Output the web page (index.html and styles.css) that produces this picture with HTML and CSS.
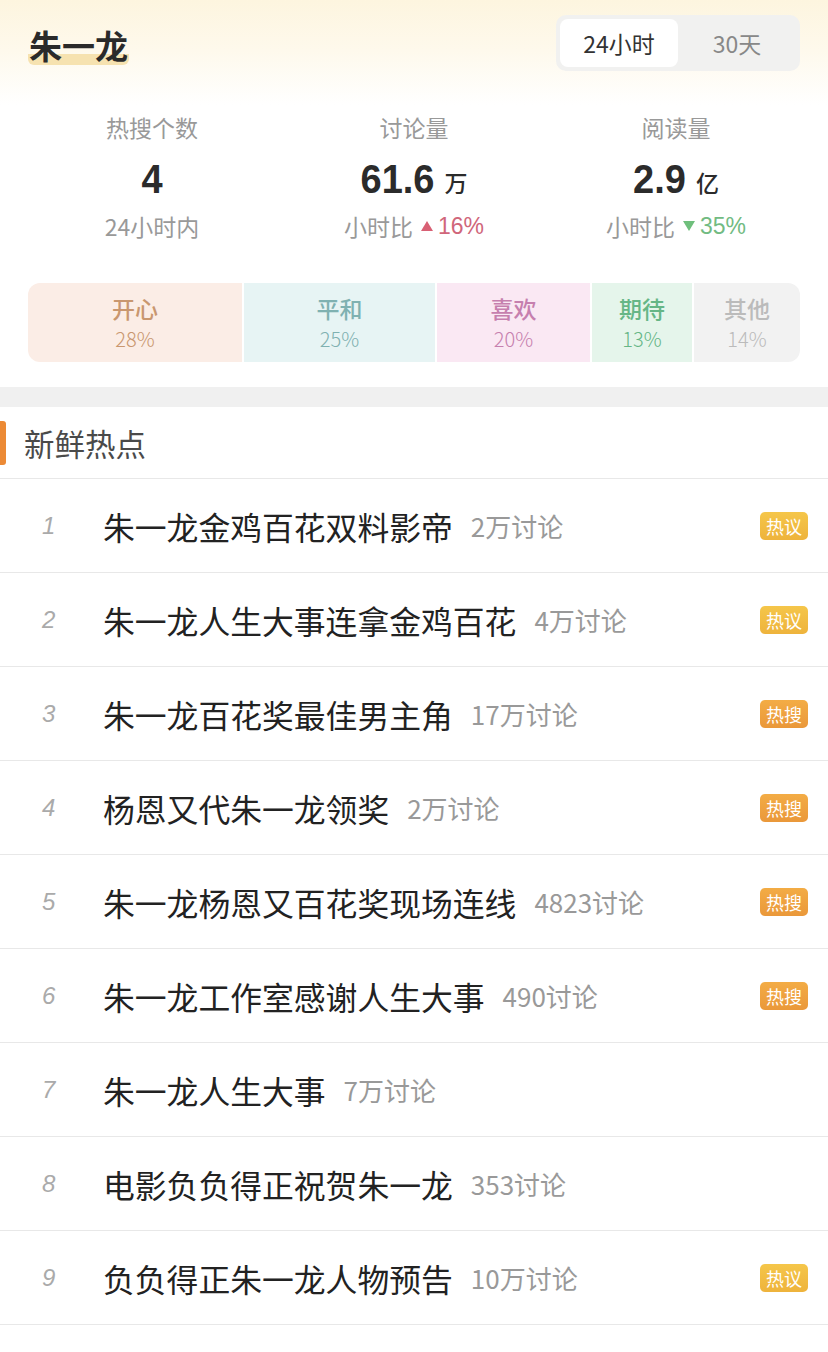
FILE: index.html
```html
<!DOCTYPE html>
<html lang="zh">
<head>
<meta charset="utf-8">
<link rel="stylesheet" href="styles.css">
</head>
<body>
<div class="page">
  <section class="top">
    <div class="head">
      <h1 class="title"><span class="title-text">朱一龙</span></h1>
      <div class="tabs">
        <div class="tab active">24小时</div>
        <div class="tab">30天</div>
      </div>
    </div>
    <div class="stats">
      <div class="stat">
        <div class="stat-label">热搜个数</div>
        <div class="stat-value"><span class="num">4</span></div>
        <div class="stat-sub">24小时内</div>
      </div>
      <div class="stat">
        <div class="stat-label">讨论量</div>
        <div class="stat-value"><span class="num">61.6</span><span class="unit">万</span></div>
        <div class="stat-sub">小时比<span class="tri up"></span><span class="chg up-c">16%</span></div>
      </div>
      <div class="stat">
        <div class="stat-label">阅读量</div>
        <div class="stat-value"><span class="num">2.9</span><span class="unit">亿</span></div>
        <div class="stat-sub">小时比<span class="tri down"></span><span class="chg down-c">35%</span></div>
      </div>
    </div>
    <div class="moods">
      <div class="mood m1"><div class="mood-name">开心</div><div class="mood-pct">28%</div></div>
      <div class="mood m2"><div class="mood-name">平和</div><div class="mood-pct">25%</div></div>
      <div class="mood m3"><div class="mood-name">喜欢</div><div class="mood-pct">20%</div></div>
      <div class="mood m4"><div class="mood-name">期待</div><div class="mood-pct">13%</div></div>
      <div class="mood m5"><div class="mood-name">其他</div><div class="mood-pct">14%</div></div>
    </div>
  </section>
  <div class="band"></div>
  <section class="list">
    <div class="list-head">新鲜热点</div>
    <div class="row"><span class="idx">1</span><span class="name">朱一龙金鸡百花双料影帝</span><span class="cnt">2万讨论</span><span class="badge yi">热议</span></div>
    <div class="row"><span class="idx">2</span><span class="name">朱一龙人生大事连拿金鸡百花</span><span class="cnt">4万讨论</span><span class="badge yi">热议</span></div>
    <div class="row"><span class="idx">3</span><span class="name">朱一龙百花奖最佳男主角</span><span class="cnt">17万讨论</span><span class="badge sou">热搜</span></div>
    <div class="row"><span class="idx">4</span><span class="name">杨恩又代朱一龙领奖</span><span class="cnt">2万讨论</span><span class="badge sou">热搜</span></div>
    <div class="row"><span class="idx">5</span><span class="name">朱一龙杨恩又百花奖现场连线</span><span class="cnt">4823讨论</span><span class="badge sou">热搜</span></div>
    <div class="row"><span class="idx">6</span><span class="name">朱一龙工作室感谢人生大事</span><span class="cnt">490讨论</span><span class="badge sou">热搜</span></div>
    <div class="row"><span class="idx">7</span><span class="name">朱一龙人生大事</span><span class="cnt">7万讨论</span></div>
    <div class="row"><span class="idx">8</span><span class="name">电影负负得正祝贺朱一龙</span><span class="cnt">353讨论</span></div>
    <div class="row"><span class="idx">9</span><span class="name">负负得正朱一龙人物预告</span><span class="cnt">10万讨论</span><span class="badge yi">热议</span></div>
  </section>
</div>
</body>
</html>
```

FILE: styles.css
```css
* { box-sizing: border-box; margin: 0; padding: 0; }
html, body { background: #fff; }
body {
  font-family: "Noto Sans CJK SC", "Noto Sans", sans-serif;
  color: #222;
  width: 828px;
  height: 1352px;
  overflow: hidden;
}
.top {
  background: linear-gradient(180deg, #fdf5df 0px, #fef9ec 50px, #ffffff 105px);
  padding: 15px 28px 25px 28px;
}
.head {
  display: flex;
  justify-content: space-between;
  align-items: flex-start;
}
.title {
  font-size: 33px;
  font-weight: 700;
  line-height: 40px;
  padding-top: 10px;
  color: #2a2a2a;
}
.title-text {
  display: inline-block;
  background: linear-gradient(180deg, transparent 0, transparent 29px, #f6e2b0 29px, #f6e2b0 40px, transparent 40px);
  border-radius: 0 0 6px 6px;
  padding: 0 1px;
}
.tabs {
  display: flex;
  background: #f1f1f0;
  border-radius: 10px;
  padding: 4px;
  width: 244px;
  height: 56px;
}
.tab {
  flex: 1;
  display: flex;
  align-items: center;
  justify-content: center;
  font-size: 23px;
  color: #888;
  border-radius: 8px;
}
.tab.active {
  background: #fff;
  color: #333;
}
.stats {
  display: flex;
  margin-top: 40px;
}
.stat {
  display: flex;
  flex-direction: column;
  align-items: center;
}
.stat-label {
  font-size: 23px;
  color: #999;
  line-height: 32px;
}
.stat-value {
  display: flex;
  align-items: baseline;
  margin-top: 14px;
  line-height: 44px;
  height: 44px;
}
.num {
  font-family: "Liberation Sans", Arial, sans-serif;
  font-weight: 700;
  font-size: 38px;
  color: #2b2b2b;
  display: inline-block;
  transform: scaleY(1.08);
}
.unit {
  font-size: 23px;
  margin-left: 10px;
  color: #2b2b2b;
  font-weight: 500;
}
.stat-sub {
  display: flex;
  align-items: center;
  font-size: 23px;
  color: #999;
  line-height: 32px;
  margin-top: 9px;
}
.chg {
  font-family: "Liberation Sans", Arial, sans-serif;
  font-size: 23px;
}
.up-c { color: #d0667a; }
.down-c { color: #72bb82; }
.tri {
  display: inline-block;
  width: 0; height: 0;
  margin: 0 5px 0 8px;
  border-left: 6px solid transparent;
  border-right: 6px solid transparent;
}
.tri.up { border-bottom: 10px solid #d86074; }
.tri.down { border-top: 10px solid #6fbf7c; }
.stats .stat:nth-child(1) { flex: 0 0 248px; }
.stats .stat:nth-child(2) { flex: 0 0 276px; }
.stats .stat:nth-child(3) { flex: 0 0 248px; }
.moods {
  display: flex;
  gap: 2px;
  margin-top: 41px;
  height: 79px;
  border-radius: 12px;
  overflow: hidden;
}
.mood {
  display: flex;
  flex-direction: column;
  align-items: center;
  justify-content: center;
  gap: 5px;
  padding-top: 2px;
}
.mood-name {
  font-size: 23px;
  font-weight: 500;
  line-height: 26px;
}
.mood-pct {
  font-size: 20px;
  font-weight: 300;
  line-height: 26px;
}
.m1 { flex: 0 0 214px; background: #fbede6; color: #c9976f; }
.m2 { flex: 0 0 191px; background: #e7f4f4; color: #7fb1b1; }
.m3 { flex: 0 0 153px; background: #fae8f3; color: #c67fae; }
.m4 { flex: 0 0 100px; background: #e5f5eb; color: #66b686; }
.m5 { flex: 1; background: #f2f2f2; color: #bbbbbb; }
.band {
  height: 20px;
  background: #f0f0f0;
}
.list-head {
  position: relative;
  height: 72px;
  display: flex;
  align-items: center;
  padding-left: 24px;
  font-size: 30.5px;
  color: #4a4a4a;
  border-bottom: 1px solid #e8e8e8;
}
.list-head::before {
  content: "";
  position: absolute;
  left: 0;
  top: 14px;
  width: 6px;
  height: 44px;
  background: #ec8a35;
  border-radius: 0 3px 3px 0;
}
.row {
  display: flex;
  align-items: center;
  height: 94px;
  border-bottom: 1px solid #e8e8e8;
  padding-right: 20px;
}
.idx {
  width: 103px;
  padding-left: 42px;
  font-family: "Liberation Sans", Arial, sans-serif;
  font-style: italic;
  font-size: 24px;
  color: #aaa;
}
.name {
  font-size: 31.8px;
  color: #222;
  line-height: 40px;
}
.cnt {
  font-size: 26px;
  color: #999;
  margin-left: 18px;
  line-height: 40px;
}
.badge {
  margin-left: auto;
  width: 48px;
  height: 28px;
  border-radius: 5px;
  color: #fff;
  font-size: 18px;
  display: flex;
  align-items: center;
  justify-content: center;
  line-height: 1;
}
.badge.yi { background: linear-gradient(180deg, #f5c64a, #eeb33c); }
.badge.sou { background: linear-gradient(180deg, #f3ac45, #ea983a); }
```
